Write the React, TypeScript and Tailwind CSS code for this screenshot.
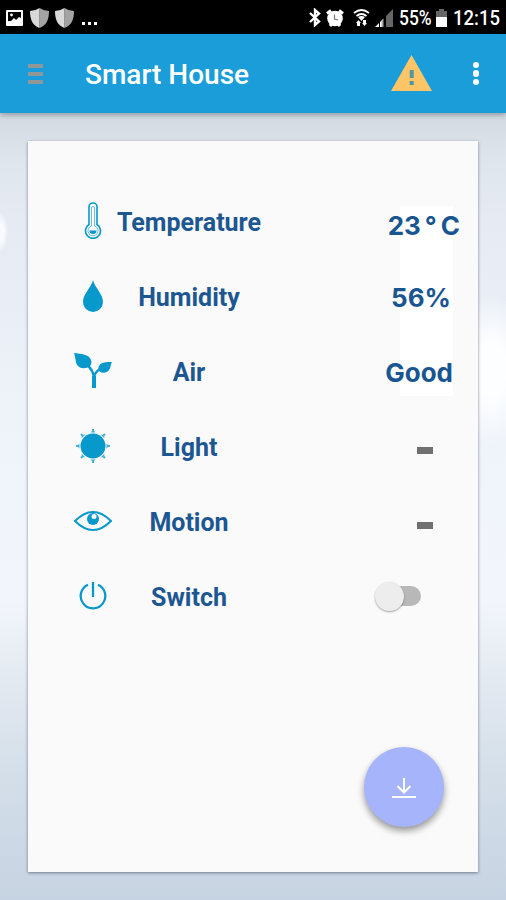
import type { ReactNode } from "react"
import clsx from "clsx"

const BLUE = "#0798cc"

function StatusBar() {
  return (
    <div className="flex h-[34px] shrink-0 items-center bg-black pt-px pr-[6px] pl-[6px] text-white">
      <svg width="17" height="16" viewBox="0 0 17 16">
        <rect width="17" height="16" rx="1" fill="#fff" />
        <path d="M2 2h13v6l-2-1-3 3-2-2-3 3H2z" fill="#000" />
        <circle cx="5.5" cy="5" r="1.4" fill="#fff" />
      </svg>
      <ShieldIcon className="ml-[7px]" />
      <ShieldIcon className="ml-[6px]" />
      <div className="mt-[11px] ml-[8px] flex gap-[3px]">
        <span className="size-[3px] bg-white" />
        <span className="size-[3px] bg-white" />
        <span className="size-[3px] bg-white" />
      </div>

      <div className="ml-auto flex items-center">
        {/* Bluetooth */}
        <svg className="mr-[-1px]" width="12" height="19" viewBox="0 0 12 19" fill="none" stroke="#fff" strokeWidth="2.400">
          <path d="M1 5l9 8.500L6 17V2l4 3.500L1 14" />
        </svg>
        {/* Alarm */}
        <svg className="ml-[6px]" width="18" height="18" viewBox="0 0 18 18">
          <path d="M1 4.500l4-3M17 4.500l-4-3M4 17l3-4M14 17l-3-4" stroke="#fff" strokeWidth="3" />
          <circle cx="9" cy="9.500" r="7.800" fill="#fff" />
          <path d="M8.500 5.500V10l3.500 1" fill="none" stroke="#777" strokeWidth="1.200" />
        </svg>
        {/* Wifi with traffic arrows */}
        <svg className="ml-[9px]" width="17" height="19" viewBox="0 0 17 19">
          <path d="M1 5q7.500-6 15 0M3.500 8q5-4 10 0" fill="none" stroke="#fff" strokeWidth="1.700" />
          <path d="M5 9q3.500-2 7 0l-3.500 4z" fill="#fff" />
          <path d="M5.500 12l2.500 3H7v3H4v-3H3zM11.500 18L9 15h1v-3h3v3h1z" fill="#fff" />
        </svg>
        {/* Signal */}
        <svg className="ml-[5px]" width="18" height="18" viewBox="0 0 18 18">
          <path d="M0 18l4-4v4zM5 13l3-3v8H5z" fill="#fff" />
          <path d="M6.500 11.500l2-2V18h-2z" fill="#aaa" />
          <path d="M11 7l7-7v18h-7z" fill="#666" />
        </svg>
        <span className="mt-px ml-[6px] w-[33px] origin-left scale-x-[0.83] text-[21px] leading-none font-medium whitespace-nowrap">
          55%
        </span>
        {/* Battery */}
        <svg className="ml-[4px]" width="11" height="18" viewBox="0 0 11 18">
          <path d="M3 0h5v2h3v7H0V2h3z" fill="#666" />
          <path d="M0 8h11v10H0z" fill="#fff" />
        </svg>
        <span className="mt-px ml-[6px] w-[47px] origin-left scale-x-[0.88] text-[21px] leading-none font-medium whitespace-nowrap">
          12:15
        </span>
      </div>
    </div>
  )
}

function ShieldIcon({ className }: { className?: string }) {
  return (
    <svg className={className} width="19" height="20" viewBox="0 0 19 20">
      <path d="M9.500 0q4.500 3 9.500 3c0 8-2 14-9.500 17z" fill="#a3a3a3" />
      <path d="M9.500 0Q5 3 0 3c0 8 2 14 9.500 17z" fill="#d9d9d9" />
    </svg>
  )
}

function AppBar() {
  return (
    <header className="z-10 flex h-[79px] shrink-0 items-center bg-[#1a9dd9] pr-[27px] pl-[28px] shadow-[0_2px_5px_rgba(70,80,90,0.45)]">
      <button className="mt-px flex flex-col gap-[4px]" aria-label="Menu">
        <span className="h-[4px] w-[15px] bg-[#8f979b]" />
        <span className="h-[4px] w-[15px] bg-[#8f979b]" />
        <span className="h-[4px] w-[15px] bg-[#8f979b]" />
      </button>
      <h1 className="ml-[42px] pt-[3px] text-[28px] leading-none font-medium text-white">Smart House</h1>
      <svg className="mr-[41px] mb-[2px] ml-auto" width="41" height="36" viewBox="0 0 41 36">
        <path d="M20.500 0L41 36H0z" fill="#fec567" />
        <path d="M18.700 15h4v8h-4zM18.700 26h4v4h-4z" fill="#4e97a6" />
      </svg>
      <button className="flex flex-col gap-[2px]" aria-label="More">
        <span className="size-[6.500px] rounded-full bg-white" />
        <span className="size-[6.500px] rounded-full bg-white" />
        <span className="size-[6.500px] rounded-full bg-white" />
      </button>
    </header>
  )
}

function ThermometerIcon() {
  return (
    <svg width="18" height="37" viewBox="0 0 18 37" fill="none" stroke={BLUE}>
      <path d="M5 5a4 4 0 0 1 8 0v17.500a7.500 7.500 0 1 1-8 0z" strokeWidth="1.600" />
      <path d="M7.500 6a1.500 1.500 0 0 1 3 0v18a5 5 0 1 1-3 0z" strokeWidth="0.600" />
      <path d="M5.500 28.500h7a3.500 3.500 0 0 1-7 0z" fill={BLUE} stroke="none" />
    </svg>
  )
}

function DropIcon() {
  return (
    <svg width="20" height="32" viewBox="0 0 20 32">
      <path d="M10 0c2 8 10 14 10 22a10 10 0 0 1-20 0C0 14 8 8 10 0z" fill={BLUE} />
    </svg>
  )
}

function PlantIcon() {
  return (
    <svg width="38" height="35" viewBox="0 0 38 35">
      <path d="M0 0c7 1 15 1 17 7 1 3 0 5-1 6-4 3-9 3-12 0C1 10 2 5 0 0z" fill={BLUE} />
      <path d="M38 9c-6 0-11 0-13 4-1 2-1 4 0 5 3 3 8 2 10-1 2-2 1-5 3-8z" fill={BLUE} />
      <path d="M12 11c5 4 8 8 8 15v9M20 25c0-4 3-7 6-9" fill="none" stroke={BLUE} strokeWidth="2.500" />
      <path d="M18 23h4v12h-4z" fill={BLUE} />
    </svg>
  )
}

function SunIcon() {
  const angles = [0, 45, 90, 135, 180, 225, 270, 315]
  return (
    <svg width="34" height="34" viewBox="0 0 34 34" fill={BLUE}>
      <circle cx="17" cy="17" r="12.500" />
      {angles.map((a) => (
        <path key={a} d="M16 0h2v2l1.500 1.500h-5L16 2z" transform={`rotate(${a} 17 17)`} opacity="0.75" />
      ))}
    </svg>
  )
}

function EyeIcon() {
  return (
    <svg width="38" height="20" viewBox="0 0 38 20" fill="none" stroke={BLUE} strokeWidth="2">
      <path d="M1 10Q10 1 19 1t18 9q-9 9-18 9T1 10z" />
      <circle cx="19" cy="8" r="6" fill={BLUE} stroke="none" />
      <circle cx="20" cy="5.500" r="2.500" fill="#fafafa" stroke="none" />
    </svg>
  )
}

function PowerIcon() {
  return (
    <svg width="28" height="28" viewBox="0 0 28 28" fill="none" stroke={BLUE} strokeWidth="2.300">
      <path d="M9 2.800a12.300 12.300 0 1 0 10 0M14 0v15" />
    </svg>
  )
}

function Dash() {
  return <span className="mt-[6px] mr-[45px] block h-[7px] w-[16px] bg-[#707070]" />
}

function Toggle() {
  return (
    <button className="mr-[57px] mb-[3px] flex h-[30px] w-[46px] items-center" role="switch" aria-checked={false}>
      <span className="size-[29px] shrink-0 rounded-full bg-[#ededed] shadow-[0_1px_2px_rgba(0,0,0,0.35)]" />
      <span className="-z-10 -ml-[14px] h-[20px] w-[31px] shrink-0 rounded-r-full bg-[#b8b8b8]" />
    </button>
  )
}

function Value({ className, children }: { className: string; children: ReactNode }) {
  return (
    <span
      className={clsx(
        "font-[Inter,sans-serif] text-[26px] leading-none font-bold whitespace-nowrap text-[#195590]",
        className,
      )}
    >
      {children}
    </span>
  )
}

const rows = [
  {
    label: "Temperature",
    icon: <ThermometerIcon />,
    value: (
      <Value className="mt-[6px] mr-[18px]">
        23<span className="mx-[4px]">°</span>C
      </Value>
    ),
  },
  {
    label: "Humidity",
    icon: <DropIcon />,
    value: <Value className="mr-[27px]">56%</Value>,
  },
  {
    label: "Air",
    icon: <PlantIcon />,
    value: <Value className="mt-px mr-[25px]">Good</Value>,
  },
  { label: "Light", icon: <SunIcon />, value: <Dash /> },
  { label: "Motion", icon: <EyeIcon />, value: <Dash /> },
  { label: "Switch", icon: <PowerIcon />, value: <Toggle /> },
]

export default function App() {
  return (
    <div className="flex h-[900px] w-[506px] flex-col overflow-hidden bg-[radial-gradient(ellipse_45px_75px_at_490px_370px,#fdfeff_35%,transparent),radial-gradient(ellipse_8px_20px_at_0px_232px,#f8fafe_50%,transparent),linear-gradient(to_bottom,#d3d9e0_110px,#dfe5ed_160px,#e5eaf3_220px,#eef3fa_400px,#f2f6fc_600px,#e2e8f0_690px,#d4dfe9_770px,#c6d3e2_900px)] font-[Roboto,sans-serif]">
      <StatusBar />
      <AppBar />
      <main className="relative isolate mt-[28px] ml-[28px] flex h-[731px] w-[450px] flex-col bg-[#fafafa] pt-[44px] shadow-[0_1px_3px_rgba(50,60,80,0.6)]">
        {/* lighter strip behind the readings */}
        <div className="absolute top-[65px] right-[25px] -z-10 h-[190px] w-[53px] bg-white" />
        {rows.map((row) => (
          <div key={row.label} className="flex h-[75px] items-center">
            <div className="ml-[42px] flex w-[46px] justify-center pb-[4px]">{row.icon}</div>
            <div className="w-[146px] text-center text-[25px] leading-none font-bold text-[#1d5791]">
              {row.label}
            </div>
            <div className="flex flex-1 justify-end">{row.value}</div>
          </div>
        ))}
        <button
          className="mt-auto mr-[34px] mb-[45px] flex size-[80px] items-center justify-center self-end rounded-full bg-[#a6b5fb] shadow-[0_4px_7px_rgba(0,0,0,0.4)]"
          aria-label="Download"
        >
          <svg className="mt-[2px]" width="24" height="21" viewBox="0 0 24 21" fill="none" stroke="#fff" strokeWidth="2">
            <path d="M12 0v14M5.500 8l6.500 6.500L18.500 8M0 19h24" />
          </svg>
        </button>
      </main>
    </div>
  )
}
